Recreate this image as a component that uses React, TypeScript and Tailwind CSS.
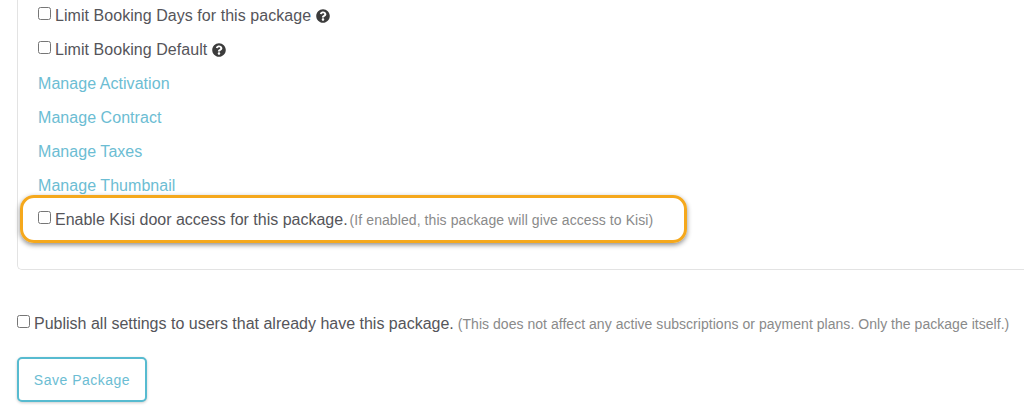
import { FaQuestionCircle } from "react-icons/fa";

const font = "font-['Liberation_Sans',Arial,sans-serif]";

function Box() {
  return <input type="checkbox" className="m-0 mr-[4px] h-[13px] w-[13px] shrink-0" />;
}

function Link({ children }: { children: string }) {
  return <a className="block text-[16px] leading-[18px] tracking-[0.05px] text-[#6cbdd3]">{children}</a>;
}

function Help() {
  return <FaQuestionCircle className="ml-[5px] mt-[2px] text-[14px] text-[#3c3c3c]" />;
}

export default function App() {
  return (
    <div className={`${font} h-[415px] w-[1024px] overflow-hidden bg-white text-[#55555a]`}>
      <div className="relative ml-[17px] flex h-[270px] flex-col gap-[16px] rounded-bl-[5px] border-b border-l border-[#e3e3e3] pl-[20px] pt-[7px]">
        <label className="flex items-start text-[16px] leading-[18px] tracking-[0.05px]">
          <Box />Limit Booking Days for this package
          <Help />
        </label>
        <label className="flex items-start text-[16px] leading-[18px] tracking-[0.05px]">
          <Box />Limit Booking Default
          <Help />
        </label>
        <Link>Manage Activation</Link>
        <Link>Manage Contract</Link>
        <Link>Manage Taxes</Link>
        <Link>Manage Thumbnail</Link>
        <label className="flex items-start text-[16px] leading-[18px]">
          <Box />Enable Kisi door access for this package.
          <span className="ml-[2px] text-[14px] tracking-[0.08px] text-[#8a8a8a]">(If enabled, this package will give access to Kisi)</span>
        </label>
        <div className="pointer-events-none absolute left-[2px] top-[195px] h-[48px] w-[667px] rounded-[14px] border-[3px] border-[#f5a81c] shadow-[0_2px_5px_rgba(0,0,0,0.45)]" />
      </div>
      <label className="ml-[17px] mt-[45px] flex items-start text-[16px] leading-[18px]">
        <Box />Publish all settings to users that already have this package.
        <span className="ml-[4px] text-[14px] tracking-[0.035px] text-[#8a8a8a]">(This does not affect any active subscriptions or payment plans. Only the package itself.)</span>
      </label>
      <button className="ml-[17px] mt-[24px] block h-[45px] w-[130px] rounded-[5px] border-2 border-[#57bbd0] bg-white pt-[2px] text-[14px] tracking-[0.5px] text-[#6cbdd3] shadow-[0_1px_3px_rgba(0,0,0,0.2)]">
        Save Package
      </button>
    </div>
  );
}
